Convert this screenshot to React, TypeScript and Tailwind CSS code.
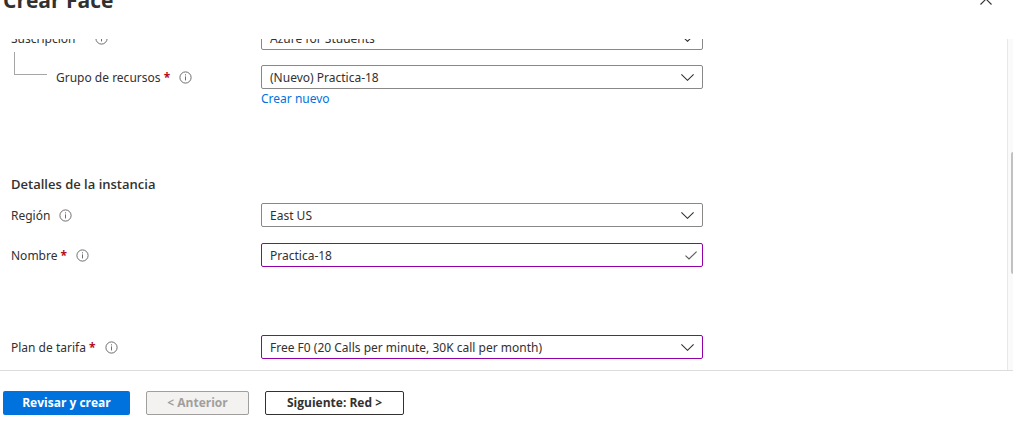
import type { ReactNode } from "react";

function InfoIcon() {
  return (
    <svg viewBox="0 0 13 13" className="size-[13px] shrink-0" fill="none" aria-hidden="true">
      <circle cx="6.5" cy="6.5" r="5.6" stroke="#605e5c" strokeWidth="0.9" />
      <path d="M6.5 5.4v4M6.5 3.3v1.1" stroke="#605e5c" strokeWidth="0.9" />
    </svg>
  );
}

function ChevronIcon() {
  return (
    <svg viewBox="0 0 13 7" className="pointer-events-none absolute top-[9px] right-[9px] h-[7px] w-[13px]" fill="none" aria-hidden="true">
      <path d="M0.4 0.4 6.5 6.3 12.6 0.4" stroke="#323130" strokeWidth="1.1" />
    </svg>
  );
}

type LabelProps = { id: string; text: string; required?: boolean; wide?: boolean };

function FieldLabel({ id, text, required, wide }: LabelProps) {
  return (
    <div className="flex h-6 items-center pt-px">
      <label htmlFor={id}>
        {text}
        {required && <span className="font-bold text-[#b10e1c]"> *</span>}
      </label>
      <button type="button" aria-label={`Información: ${text}`} className={wide ? "ml-5" : "ml-[9px]"}>
        <InfoIcon />
      </button>
    </div>
  );
}

function SelectBox({ id, value, edited }: { id: string; value: string; edited?: boolean }) {
  return (
    <div className="relative">
      <select
        id={id}
        className={`block h-6 w-full appearance-none rounded-xs border bg-white pt-px pr-8 pl-2 ${edited ? "border-[#9400a8]" : "border-[#8a8886]"}`}
      >
        <option>{value}</option>
      </select>
      <ChevronIcon />
    </div>
  );
}

function Row({ label, children }: { label: ReactNode; children: ReactNode }) {
  return (
    <div className="grid grid-cols-[250px_minmax(0,442px)]">
      {label}
      {children}
    </div>
  );
}

export default function App() {
  return (
    <div className="flex flex-col bg-white font-['Noto_Sans','Open_Sans',sans-serif] text-[12px] leading-4 text-[#323130]">
      <header className="flex h-[39px] items-end justify-between overflow-hidden pr-[21px] pb-[25px] pl-[3px]">
        <h1 className="font-['Open_Sans','Noto_Sans',sans-serif] text-[21px] leading-7 font-bold">Crear Face</h1>
        <button type="button" aria-label="Cerrar" className="mb-[9px]">
          <svg viewBox="0 0 12 12" className="size-3" fill="none" aria-hidden="true">
            <path d="M0.5 0.5 11.5 11.5M11.5 0.5 0.5 11.5" stroke="#323130" strokeWidth="1.1" />
          </svg>
        </button>
      </header>

      <main className="flex overflow-hidden border-b border-[#dcdcdc]">
        <form className="-mt-[13px] min-w-0 flex-1 pb-[11px] pl-[11px]">
          <Row label={<FieldLabel id="suscripcion" text="Suscripción" wide />}>
            <SelectBox id="suscripcion" value="Azure for Students" />
          </Row>
          <Row
            label={
              <div className="flex">
                <div className="mt-[2px] mr-[9px] ml-[3px] h-[23px] w-[33px] border-b border-l border-[#a6a6a6]" />
                <div className="pt-[15px]">
                  <FieldLabel id="grupo" text="Grupo de recursos" required />
                </div>
              </div>
            }
          >
            <div className="pt-[15px]">
              <SelectBox id="grupo" value="(Nuevo) Practica-18" />
              <a href="#nuevo" className="mt-[2px] block w-fit text-[#0072de]">
                Crear nuevo
              </a>
            </div>
          </Row>

          <h2 className="mt-[69px] mb-[11px] font-['Open_Sans','Noto_Sans',sans-serif] text-[13px] leading-4 font-semibold">
            Detalles de la instancia
          </h2>
          <Row label={<FieldLabel id="region" text="Región" />}>
            <SelectBox id="region" value="East US" />
          </Row>
          <div className="mt-4">
            <Row label={<FieldLabel id="nombre" text="Nombre" required />}>
              <div className="relative">
                <input
                  id="nombre"
                  type="text"
                  defaultValue="Practica-18"
                  className="block h-6 w-full rounded-xs border border-[#9400a8] pr-8 pl-2"
                />
                <svg viewBox="0 0 12 9" className="pointer-events-none absolute top-2 right-[6px] h-[9px] w-3" fill="none" aria-hidden="true">
                  <path d="M0.5 4.6 4 8 11.6 0.6" stroke="#605e5c" strokeWidth="1.2" />
                </svg>
              </div>
            </Row>
          </div>
          <div className="mt-[68px]">
            <Row label={<FieldLabel id="plan" text="Plan de tarifa" required />}>
              <SelectBox id="plan" value="Free F0 (20 Calls per minute, 30K call per month)" edited />
            </Row>
          </div>
        </form>
        <div className="flex w-[6px] justify-end border-l border-[#e8e8e8] bg-[#fafafa] pt-[113px]">
          <div className="h-[122px] w-[2px] rounded-l-xs bg-[#c1c1c1]" />
        </div>
      </main>

      <footer className="flex gap-4 px-[3px] py-5 font-['Open_Sans','Noto_Sans',sans-serif] font-bold">
        <button type="button" className="h-6 w-[127px] rounded-xs bg-[#0072de] text-white">
          Revisar y crear
        </button>
        <button type="button" disabled className="h-6 w-[103px] rounded-xs border border-[#a19f9d] bg-[#f3f2f1] text-[#a19f9d]">
          &lt; Anterior
        </button>
        <button type="button" className="h-6 w-[139px] rounded-xs border border-[#323130]">
          Siguiente: Red &gt;
        </button>
      </footer>
    </div>
  );
}
